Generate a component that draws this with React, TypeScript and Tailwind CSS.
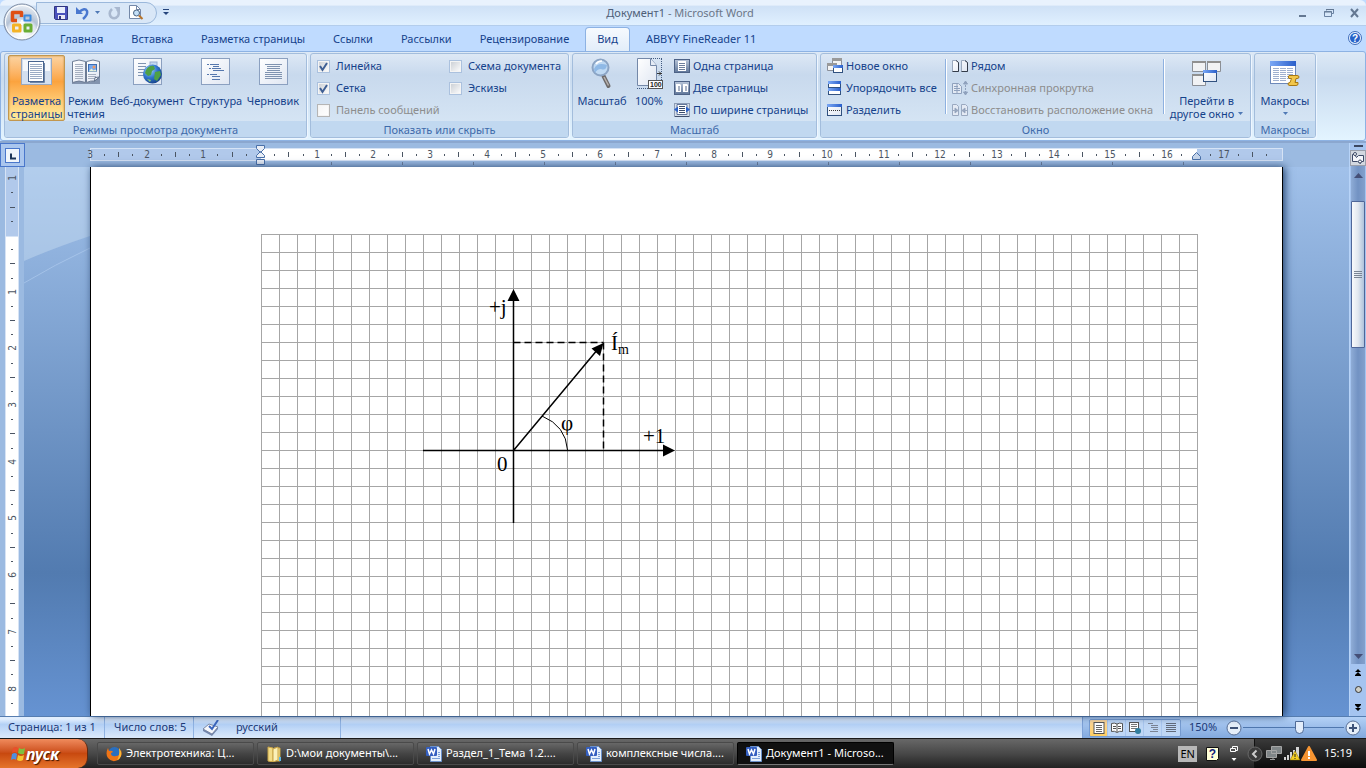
import React, { useState } from "react";

const tabs = ["Главная", "Вставка", "Разметка страницы", "Ссылки", "Рассылки", "Рецензирование", "Вид", "ABBYY FineReader 11"];

const tasks = [
  { icon: "firefox", title: "Электротехника: Ц..." },
  { icon: "folder", title: "D:\\мои документы\\..." },
  { icon: "word", title: "Раздел_1_Тема 1.2...." },
  { icon: "word", title: "комплексные числа...." },
  { icon: "word", title: "Документ1 - Microso..." },
];

// Ruler centimetre at 150% zoom
const CM = 56.69;

function Lines({ x, y, w, n, step = 3, color = "#7f93b0" }: { x: number; y: number; w: number; n: number; step?: number; color?: string }) {
  return (
    <>
      {Array.from({ length: n }, (_, i) => (
        <rect key={i} x={x} y={y + i * step} width={w} height="1" fill={color} />
      ))}
    </>
  );
}

function SharedGradients() {
  return (
    <svg width="0" height="0" className="absolute" aria-hidden="true">
      <defs>
        <linearGradient id="sheet" x1="0" y1="0" x2="1" y2="1">
          <stop offset="0" stopColor="#fff" />
          <stop offset="1" stopColor="#dfe6f2" />
        </linearGradient>
        <linearGradient id="steel" x1="0" y1="0" x2="0" y2="1">
          <stop offset="0" stopColor="#b9c6d9" />
          <stop offset="1" stopColor="#5f7699" />
        </linearGradient>
        <radialGradient id="globe" cx="0.35" cy="0.3" r="0.8">
          <stop offset="0" stopColor="#a5d4ff" />
          <stop offset="0.5" stopColor="#2f74cc" />
          <stop offset="1" stopColor="#123a80" />
        </radialGradient>
        <linearGradient id="winbar" x1="0" y1="0" x2="1" y2="0">
          <stop offset="0" stopColor="#7ba8f5" />
          <stop offset="1" stopColor="#2a5fca" />
        </linearGradient>
      </defs>
    </svg>
  );
}

function PrintLayoutIcon() {
  return (
    <svg width="31" height="27" viewBox="0 0 31 27">
      <rect x="0.5" y="0.5" width="30" height="26" fill="#d3dfef" stroke="#9aa9c0" />
      <rect x="2" y="2" width="27" height="11" fill="#f5f8fc" />
      <rect x="7.5" y="3.5" width="15" height="20" fill="#fff" stroke="#48648f" />
      <path d="M23.5 5v19.500H9" fill="none" stroke="#6f86a8" />
      <Lines x={9} y={6} w={12} n={8} step={2} color="#9babc4" />
    </svg>
  );
}

function ReadingIcon() {
  return (
    <svg width="30" height="27" viewBox="0 0 30 27">
      <path d="M1 5h28v21H1z" fill="#8394ae" />
      <path d="M1.500 3.500Q8 .5 14.500 3.500v21Q8 21.500 1.500 24.500z" fill="url(#sheet)" stroke="#6d7c94" />
      <path d="M28.500 3.500Q22 .5 15.500 3.500v21q4-2 8-1.500l5-4z" fill="url(#sheet)" stroke="#6d7c94" />
      <Lines x={4} y={6} w={8} n={8} step={2} color="#a6b0c0" />
      <rect x="17.500" y="6.500" width="8" height="7" fill="#76a9ee" stroke="#3d6fb5" />
      <path d="M17.500 13.500l3-3 2 2 2-1 1.500 2z" fill="#e8f2d8" />
      <circle cx="23" cy="9" r="1.500" fill="#f09860" />
      <Lines x={17} y={16} w={8} n={3} step={2} color="#a6b0c0" />
      <path d="M23.500 23l.5-3.500 4.500-.5z" fill="#fff" stroke="#5d6f8a" />
    </svg>
  );
}

function WebIcon() {
  return (
    <svg width="29" height="27" viewBox="0 0 29 27">
      <rect x="0.5" y="0.5" width="28" height="26" fill="url(#sheet)" stroke="#8ba0c0" />
      <Lines x={5} y={5} w={8} n={5} />
      <rect x="17" y="4" width="7" height="5" fill="#c4d8f2" stroke="#98acd0" />
      <circle cx="19.500" cy="16" r="9.500" fill="url(#globe)" />
      <path d="M13 12q3-5 8-4l1 3-3 2-1 4-3 1-3-3zM22 14l5-1 1 4-4 6-3-2z" fill="#4fa045" />
      <path d="M14 21l4 1-1 2z" fill="#8bc870" />
    </svg>
  );
}

function OutlineIcon() {
  return (
    <svg width="29" height="27" viewBox="0 0 29 27">
      <rect x="0.5" y="0.5" width="28" height="26" fill="url(#sheet)" stroke="#8ba0c0" />
      <path d="M6 6.500h2m1 0h9M8 10.500h2m1 0h9M12 12.500h11M12 8.500h6M6 16.500h2m1 0h7M11 18.500h8M11 21.500h8" stroke="#5577ad" />
    </svg>
  );
}

function DraftIcon() {
  return (
    <svg width="29" height="27" viewBox="0 0 29 27">
      <rect x="0.5" y="0.5" width="28" height="26" fill="url(#sheet)" stroke="#8ba0c0" />
      <Lines x={6} y={6} w={17} n={1} step={2} />
      <Lines x={8} y={8} w={13} n={3} step={2} />
      <Lines x={6} y={14} w={17} n={4} step={2} />
    </svg>
  );
}

function MagnifierIcon() {
  return (
    <svg width="22" height="32" viewBox="0 0 22 32">
      <path d="M12.500 18l5 10" stroke="#6d6a6a" strokeWidth="4" strokeLinecap="round" />
      <path d="M13 19l4.500 8.500" stroke="#b8b2ae" strokeWidth="1.500" />
      <circle cx="9.500" cy="9.500" r="8" fill="#bfd9f3" stroke="#8ba4c4" strokeWidth="2" />
      <path d="M3 11q3-7 13-4-1 6-6 4-4 0-6 4z" fill="#8fb9e6" />
      <path d="M5 6q2-3 6-3" stroke="#fff" fill="none" strokeWidth="1.500" />
    </svg>
  );
}

function HundredIcon() {
  return (
    <svg width="27" height="32" viewBox="0 0 27 32">
      <path d="M15 .5h11M25.500 1v21M1 30.500h11" stroke="#415a80" strokeDasharray="1 1" fill="none" />
      <path d="M1.500.5h13l6 7v20h-19z" fill="url(#sheet)" stroke="#7488a8" />
      <path d="M14.500.5v7h6" fill="#e5ebf5" stroke="#7488a8" />
      <path d="M21 15.500h5M23 13.500l2 2-2 2" stroke="#333" fill="none" />
      <rect x="12.500" y="22.500" width="14" height="8" fill="#fff" stroke="#555" />
      <text x="14" y="29" fontSize="7" fontWeight="bold" fontFamily="Liberation Sans, sans-serif" fill="#222">100</text>
    </svg>
  );
}

function SmallIcon({ name }: { name: string }) {
  return (
    <svg width="16" height="16" viewBox="0 0 16 16" className="shrink-0">
      {name === "onePage" && (
        <>
          <rect x="0.5" y="1.500" width="15" height="13" fill="url(#steel)" stroke="#4d6286" />
          <rect x="4" y="3" width="8" height="10" fill="#fff" />
          <Lines x={5} y={5} w={6} n={4} step={2} color="#6d7f9c" />
        </>
      )}
      {name === "twoPages" && (
        <>
          <rect x="0.5" y="1.500" width="15" height="13" fill="url(#steel)" stroke="#4d6286" />
          <path d="M2 4h4l1 1v7H2zM9 4h4l1 1v7H9z" fill="#fff" />
          <path d="M5 6v5M12 6v5" stroke="#54688a" />
        </>
      )}
      {name === "pageWidth" && (
        <>
          <rect x="0.5" y="1.500" width="15" height="13" fill="#d5deea" stroke="#8c9cb5" />
          <path d="M3 2.500h10v10H3z" fill="#fff" stroke="#62769a" />
          <Lines x={5} y={4} w={6} n={4} step={2} color="#3b4d6c" />
          <path d="M0 7.500l4-3v6zM16 7.500l-4-3v6z" fill="#2c62c8" />
          <path d="M1 14.500h14" stroke="#3f4f6c" />
        </>
      )}
      {name === "newWindow" && (
        <>
          <path d="M5.500.5h9v7h-9zM.5 5.500h9v7h-9z" fill="#f4f4f4" stroke="#8a8f99" />
          <path d="M5 0h10v3H5zM0 5h10v3H0z" fill="#9a9a9a" />
          <rect x="6.500" y="8.500" width="9" height="6" fill="#fff" stroke="#31517f" />
          <rect x="6" y="7" width="10" height="3" fill="url(#winbar)" />
        </>
      )}
      {name === "arrange" && (
        <>
          <rect x="1.500" y="2" width="12" height="12.500" fill="#fff" stroke="#31517f" />
          <path d="M1 1h13v3H1zM1 8h13v3H1z" fill="url(#winbar)" />
          <path d="M2 7.500h12" stroke="#31517f" />
        </>
      )}
      {name === "split" && (
        <>
          <rect x="0.5" y="2.500" width="14" height="11" fill="url(#sheet)" stroke="#31517f" />
          <rect x="0" y="2" width="15" height="3" fill="url(#winbar)" />
          <path d="M2 8.500h12" stroke="#333" strokeDasharray="1 1" />
        </>
      )}
      {name === "sideBySide" && (
        <>
          <path d="M.5 2.500h4l2 2v9h-6zM9.500 2.500h3l3 2v9h-6z" fill="url(#sheet)" stroke="#9aa9be" />
          <path d="M4 2.500l2.500 2v9M13 2.500l2.500 2v9M.5 13.500h6M9.500 13.500h6" fill="none" stroke="#333b49" />
        </>
      )}
      {name === "sync" && (
        <g stroke="#8fa1bd" fill="none">
          <path d="M.5 3.500h6l3 3v7h-9z" fill="#e4eaf4" />
          <path d="M2 6.500h4M2 8.500h6M2 10.500h6M5 4v9" />
          <path d="M13.500 2v12" strokeDasharray="2 1" />
          <path d="M11.500 4l2-3 2 3zM11.500 12l2 3 2-3z" fill="#8fa1bd" />
        </g>
      )}
      {name === "reset" && (
        <g stroke="#9aa9c0">
          <path d="M.5 2.500h4l2 2v9h-6zM9.500 2.500h4l2 2v9h-6z" fill="#e4eaf4" />
          <path d="M1 8.500h4M3 6l3 2.500L3 11zM15 8.500h-4M13 6l-3 2.500 3 2.500z" fill="#8496b5" />
        </g>
      )}
    </svg>
  );
}

function SwitchIcon() {
  return (
    <svg width="29" height="26" viewBox="0 0 29 26">
      <g fill="#f1f2f4" stroke="#8b8f96">
        <path d="M.5.5h13v10H.5zM15.500.5h13v10h-13zM.5 13.500h13v11H.5z" />
      </g>
      <path d="M0 0h14v2H0zM15 0h14v2H15zM0 13h14v2H0z" fill="#909090" />
      <rect x="11.500" y="9.500" width="13" height="11" fill="url(#sheet)" stroke="#31517f" />
      <rect x="11" y="9" width="14" height="3" fill="url(#winbar)" />
    </svg>
  );
}

function MacroIcon() {
  return (
    <svg width="30" height="26" viewBox="0 0 30 26">
      <rect x="0.5" y="1.500" width="25" height="21" fill="#fff" stroke="#6d89ba" />
      <rect x="0" y="0" width="26" height="5" fill="url(#winbar)" />
      <path d="M3 7.500h20M3 9.500h20M3 11.500h20M3 13.500h20M3 15.500h20M3 17.500h20M3 19.500h14" stroke="#9fb0cf" strokeDasharray="6 1" />
      <path d="M19 14.500h8q2 0 2 1.500t-2 1.500h-1l-1 4h3v1.500q0 1.500-2 1.500h-6q-2 0-2-1.500t2-1.500l1.500-4H19q-1.500-1.500 0-3z" fill="#f2c64a" stroke="#a87812" />
    </svg>
  );
}

function Caret() {
  return (
    <svg width="5" height="3" viewBox="0 0 5 3" className="inline-block align-middle">
      <path d="M0 0h5L2.500 3z" fill="#4f79b5" />
    </svg>
  );
}

function Group({ title, className, children }: { title: string; className: string; children: React.ReactNode }) {
  return (
    <section className={`flex shrink-0 flex-col overflow-hidden rounded-[3px] border border-[#a3bddc] bg-linear-to-b from-[#dde8f5] from-0% via-[#c8d9ed] via-25% to-[#d9e8f6] shadow-[1px_1px_0_#eef6ff] ${className}`}>
      <div className="flex flex-1 items-start pt-px">{children}</div>
      <h2 className="h-4 bg-[#c1d8f0] text-center leading-[17px] text-[#3e6aaa]">{title}</h2>
    </section>
  );
}

function BigButton({ icon, lines, active, className, caret }: { icon: React.ReactNode; lines: string[]; active?: boolean; className: string; caret?: boolean }) {
  return (
    <button
      className={`flex h-[66px] shrink-0 flex-col items-center whitespace-nowrap pt-0.5 leading-[13px] ${className} ${
        active ? "rounded-[2px] border border-[#c2974f] bg-linear-to-b from-[#fbd3a0] from-0% via-[#fba33e] via-40% to-[#fff0a0] shadow-[inset_0_0_2px_#b8863c]" : "border border-transparent"
      }`}
    >
      <span className={`flex h-9 items-start ${caret ? "pt-[3px]" : ""}`}>{icon}</span>
      {lines.map((line, i) => (
        <span key={line} className="flex items-center gap-1">
          {line}
          {caret && i > 0 && <Caret />}
        </span>
      ))}
      {caret && lines.length === 1 && <span className="leading-[10px]"><Caret /></span>}
    </button>
  );
}

function Command({ icon, label, disabled }: { icon: string; label: string; disabled?: boolean }) {
  return (
    <button disabled={disabled} className="flex h-[22px] items-center gap-[3px] whitespace-nowrap disabled:text-[#8d8d8d]">
      <SmallIcon name={icon} />
      {label}
    </button>
  );
}

function Check({ label, defaultChecked, disabled }: { label: string; defaultChecked?: boolean; disabled?: boolean }) {
  return (
    <label className={`flex h-[22px] items-center gap-1.5 whitespace-nowrap ${disabled ? "text-[#8d8d8d]" : ""}`}>
      <span className="relative flex">
        <input
          type="checkbox"
          defaultChecked={defaultChecked}
          disabled={disabled}
          className="peer size-[13px] appearance-none border border-[#abc1de] bg-linear-to-br from-[#c9cdd3] to-white shadow-[inset_0_0_0_1px_#f4f4f4] disabled:border-[#b5b5b5] disabled:from-[#f4f4f4]"
        />
        <svg width="13" height="13" viewBox="0 0 13 13" className="pointer-events-none invisible absolute inset-0 peer-checked:visible">
          <path d="M3 6l2.500 4L10 3" fill="none" stroke="#3f5f94" strokeWidth="2" />
        </svg>
      </span>
      {label}
    </label>
  );
}

function Separator() {
  return <div className="mt-1 h-[55px] w-0.5 shrink-0 border-l border-[#8eb1e0] bg-white" />;
}

function OfficeButton() {
  return (
    <button aria-label="Office" className="absolute top-[3px] left-[3px] z-10">
      <svg width="38" height="38" viewBox="0 0 38 38">
        <defs>
          <radialGradient id="orb" cx="0.5" cy="0.85" r="0.9">
            <stop offset="0" stopColor="#fff" />
            <stop offset="0.45" stopColor="#dde4ee" />
            <stop offset="0.55" stopColor="#b4c2d5" />
            <stop offset="1" stopColor="#f6f9fd" />
          </radialGradient>
        </defs>
        <circle cx="19" cy="19" r="18" fill="url(#orb)" stroke="#7c8ba3" />
        <circle cx="19" cy="19" r="16.500" fill="none" stroke="#fff" />
        <g fill="none" strokeLinejoin="round">
          <path d="M14 17.500H9.500V9.500h9V14" stroke="#df4f14" strokeWidth="3.500" />
          <path d="M21.500 17.500h6v-5h-6z" stroke="#3b8ade" strokeWidth="2" />
          <path d="M10.500 22v6h6.500v-6z" stroke="#f4b326" strokeWidth="3" />
          <path d="M22 22v6h6v-6z" stroke="#6aae35" strokeWidth="3" />
        </g>
        <path d="M16.500 19.500h5M19 17v5" stroke="#fff" strokeWidth="1.500" />
      </svg>
    </button>
  );
}

function TitleBar() {
  return (
    <header className="flex h-[26px] shrink-0 items-center rounded-t-md border-b border-[#b3cdec] bg-linear-to-b from-[#e9f2fd] from-20% via-[#cfe1f6] via-25% to-[#e0f0ff]">
      <div className="flex flex-1 items-center">
        <div className="ml-9 flex h-[22px] w-[121px] items-center rounded-r-full border border-[#9bb8db] bg-[#d9e7f7] pl-[17px]">
          <button aria-label="Сохранить">
            <svg width="14" height="14" viewBox="0 0 14 14">
              <path d="M.5.5h13v13h-12l-1-1z" fill="#4a52bc" stroke="#30357f" />
              <path d="M3 1h8v6H3z" fill="#e8eefc" />
              <path d="M4 9h7v4H4z" fill="#e8e8f4" />
              <path d="M5 10h2v3H5z" fill="#30357f" />
            </svg>
          </button>
          <button aria-label="Отменить" className="ml-2 flex items-center gap-1.5">
            <svg width="13" height="14" viewBox="0 0 13 14">
              <path d="M3 6q6-5 8-1 1 4-4 8" fill="none" stroke="#4a78cf" strokeWidth="2.500" />
              <path d="M0 1v7h7z" fill="#4a78cf" />
            </svg>
            <Caret />
          </button>
          <button aria-label="Повторить" disabled className="ml-2">
            <svg width="13" height="14" viewBox="0 0 13 14">
              <path d="M4 3q-4 4-1 8 4 3 7-1 2-4-1-7" fill="none" stroke="#a9b8cf" strokeWidth="2.500" />
              <path d="M6 1h6v6z" fill="#a9b8cf" />
            </svg>
          </button>
          <button aria-label="Предварительный просмотр" className="ml-2">
            <svg width="15" height="15" viewBox="0 0 15 15">
              <path d="M.5.5h7l4 4v9H.5z" fill="#fff" stroke="#7488a8" />
              <path d="M7.500.5v4h4" fill="none" stroke="#7488a8" />
              <circle cx="7.500" cy="8" r="3" fill="#c5e0f7" stroke="#496381" />
              <path d="M10 10.500l3.500 3.500" stroke="#b8742a" strokeWidth="2" />
            </svg>
          </button>
        </div>
        <button aria-label="Настройка панели" className="ml-1.5">
          <svg width="6" height="7" viewBox="0 0 6 7">
            <path d="M0 .5h6" stroke="#24447c" />
            <path d="M0 3h6L3 6z" fill="#24447c" />
          </svg>
        </button>
      </div>
      <h1 className="pt-0.5 text-[#4f5f78]">
        Документ1 <span className="text-[#6b7688]">- Microsoft Word</span>
      </h1>
      <div className="flex flex-1 justify-end gap-4 pr-1.5">
        <button aria-label="Свернуть">
          <svg width="10" height="10" viewBox="0 0 10 10"><path d="M1 8h7" stroke="#647892" strokeWidth="2" /></svg>
        </button>
        <button aria-label="Восстановить">
          <svg width="10" height="10" viewBox="0 0 10 10">
            <path d="M2.500 2.500v-1h7v4h-2M.5 3.500h7v5h-7z" fill="none" stroke="#6b83a3" />
            <path d="M0 4h8M2 1.500h8" stroke="#647892" />
          </svg>
        </button>
        <button aria-label="Закрыть">
          <svg width="10" height="10" viewBox="0 0 10 10"><path d="M1 1l7 8M8 1L1 9" stroke="#647892" strokeWidth="2" /></svg>
        </button>
      </div>
    </header>
  );
}

function Tabs() {
  const [current, setCurrent] = useState("Вид");
  return (
    <nav className="flex h-[25px] shrink-0 items-end bg-[#bfdbff] pl-[46px]">
      {tabs.map((tab) => (
        <button
          key={tab}
          onClick={() => setCurrent(tab)}
          className={`mx-0.5 h-6 rounded-t border-x border-t px-[11px] whitespace-nowrap ${
            tab === current ? "border-[#8db2e3] bg-linear-to-b from-[#f6fafe] to-[#e2edf9]" : "border-transparent"
          }`}
        >
          {tab}
        </button>
      ))}
      <button aria-label="Справка" className="mr-1 mb-1.5 ml-auto">
        <svg width="14" height="14" viewBox="0 0 14 14">
          <circle cx="7" cy="7" r="6.500" fill="#e6f1ff" stroke="#3e6cba" />
          <circle cx="7" cy="7" r="5" fill="#2762c8" />
          <text x="7" y="10.500" textAnchor="middle" fontSize="10" fontWeight="bold" fontFamily="Liberation Sans, sans-serif" fill="#fff">?</text>
        </svg>
      </button>
    </nav>
  );
}

function Ribbon() {
  return (
    <div className="flex h-[90px] shrink-0 gap-[3px] rounded-[3px] border border-[#8db2e3] bg-linear-to-b from-[#dde9f6] from-0% via-[#c9dbef] via-30% to-[#e3f4ff] px-[3px] pt-px pb-0.5">
      <Group title="Режимы просмотра документа" className="w-[303px]">
        <div className="flex pl-[3px]">
          <BigButton active className="w-[57px]" icon={<PrintLayoutIcon />} lines={["Разметка", "страницы"]} />
          <BigButton className="w-[42px]" icon={<ReadingIcon />} lines={["Режим", "чтения"]} />
          <BigButton className="w-20" icon={<WebIcon />} lines={["Веб-документ"]} />
          <BigButton className="w-[57px]" icon={<OutlineIcon />} lines={["Структура"]} />
          <BigButton className="w-[58px]" icon={<DraftIcon />} lines={["Черновик"]} />
        </div>
      </Group>
      <Group title="Показать или скрыть" className="w-[259px]">
        <div className="w-[132px] pl-1.5">
          <Check label="Линейка" defaultChecked />
          <Check label="Сетка" defaultChecked />
          <Check label="Панель сообщений" disabled />
        </div>
        <div className="pl-1.5">
          <Check label="Схема документа" />
          <Check label="Эскизы" />
        </div>
      </Group>
      <Group title="Масштаб" className="w-[245px]">
        <BigButton className="ml-0.5 w-[54px]" icon={<MagnifierIcon />} lines={["Масштаб"]} />
        <BigButton className="w-10" icon={<HundredIcon />} lines={["100%"]} />
        <div className="pl-[5px]">
          <Command icon="onePage" label="Одна страница" />
          <Command icon="twoPages" label="Две страницы" />
          <Command icon="pageWidth" label="По ширине страницы" />
        </div>
      </Group>
      <Group title="Окно" className="w-[431px]">
        <div className="w-[124px] shrink-0 pl-1.5">
          <Command icon="newWindow" label="Новое окно" />
          <Command icon="arrange" label="Упорядочить все" />
          <Command icon="split" label="Разделить" />
        </div>
        <Separator />
        <div className="w-[216px] shrink-0 pl-[5px]">
          <Command icon="sideBySide" label="Рядом" />
          <Command icon="sync" label="Синхронная прокрутка" disabled />
          <Command icon="reset" label="Восстановить расположение окна" disabled />
        </div>
        <Separator />
        <BigButton className="w-[83px]" icon={<SwitchIcon />} lines={["Перейти в", "другое окно"]} caret />
      </Group>
      <Group title="Макросы" className="w-[62px]">
        <BigButton className="w-[60px]" icon={<MacroIcon />} lines={["Макросы"]} caret />
      </Group>
    </div>
  );
}

function HorizontalRuler() {
  const marks: React.ReactNode[] = [];
  for (let q = -12; q <= 71; q++) {
    const x = Math.round(235 + (q * CM) / 4);
    if (q === 0 || q === 66) continue;
    if (q % 4 === 0) {
      marks.push(<text key={q} x={x} y="15" textAnchor="middle">{Math.abs(q / 4)}</text>);
    } else {
      const half = q % 2 === 0;
      marks.push(<rect key={q} x={x} y={half ? 9 : 11} width="1" height={half ? 5 : 2} />);
    }
  }
  return (
    <svg className="h-6 flex-1 bg-[#9bbae1]" fill="#4b5563" fontSize="10" fontFamily="DejaVu Sans Condensed, Noto Sans, sans-serif">
      <rect x="65.500" y="5.500" width="1192" height="12" fill="#b1c9eb" stroke="#d6e3f5" />
      <rect x="236" y="6" width="936" height="11" fill="#fff" />
      {marks}
      {Array.from({ length: 13 }, (_, i) => (
        <rect key={i} x={306 + i * 71} y="19" width="1" height="3" fill="#6e7f99" />
      ))}
      <path d="M231.500 2.500h8v3l-4 4-4-4zM231.500 14.500v-2l4-4 4 4v2zM231.500 16.500h8v5h-8z" fill="#e9eef6" stroke="#4a70a8" />
      <path d="M1167.500 16.500v-3l4-4 4 4v3z" fill="#c6d5ea" stroke="#4a70a8" />
    </svg>
  );
}

function VerticalRuler() {
  const marks: React.ReactNode[] = [];
  for (let q = -4; q <= 33; q++) {
    const y = Math.round(68 + (q * CM) / 4);
    if (q === 0) continue;
    if (q % 4 === 0) {
      marks.push(<text key={q} transform={`translate(16 ${y}) rotate(-90)`} textAnchor="middle">{Math.abs(q / 4)}</text>);
    } else {
      const half = q % 2 === 0;
      marks.push(<rect key={q} x={half ? 10 : 11} y={y} width={half ? 5 : 2} height="1" />);
    }
  }
  return (
    <svg className="h-full w-6 shrink-0 bg-[#9bbae1]" fill="#4b5563" fontSize="10" fontFamily="DejaVu Sans Condensed, Noto Sans, sans-serif">
      <rect x="5" y="0" width="14" height="100%" fill="#d6e3f5" />
      <rect x="6" y="0" width="12" height="69" fill="#b1c9eb" />
      <rect x="6" y="70" width="12" height="100%" fill="#fff" />
      {marks}
    </svg>
  );
}

function Drawing() {
  return (
    <svg width="1191" height="549" viewBox="91 167 1191 549">
      <g stroke="#a6a6a6" shapeRendering="crispEdges">
        {Array.from({ length: 53 }, (_, i) => (
          <path key={`v${i}`} d={`M${261.5 + i * 18} 234v500`} />
        ))}
        {Array.from({ length: 28 }, (_, i) => (
          <path key={`h${i}`} d={`M261 ${234.5 + i * 18}h937`} />
        ))}
      </g>
      <g stroke="#000" strokeWidth="1.500" fill="none">
        <path d="M513.500 523V298M423 450.500h242M513.500 450.500L598 349" />
        <path d="M513.500 342.500h90M603.500 342.500v108" strokeDasharray="7 4" />
        <path d="M542 416q24 10 25.500 34" strokeWidth="1" />
      </g>
      <path d="M513.500 289l6 12h-12zM675 450.500l-12-6v12zM603.500 343l-3.500 13-8.500-7.500z" />
      <g fontFamily="Liberation Serif, serif" fontSize="21">
        <text x="489" y="314">+j</text>
        <text x="611" y="350">Í<tspan fontSize="14" dy="4">m</tspan></text>
        <text x="561" y="430">φ</text>
        <text x="643" y="443">+1</text>
        <text x="497" y="471">0</text>
      </g>
    </svg>
  );
}

function Scrollbar() {
  return (
    <div className="flex w-[17px] shrink-0 flex-col items-center border-l border-[#b8d4f8] bg-[#a5c4f0]">
      <div className="mt-0.5 h-0.5 w-[9px] shrink-0 bg-[#3c4761]" />
      <button aria-label="Линейка" className="mt-[3px] flex h-4 w-full shrink-0 items-center justify-center border border-[#9a9fac] bg-[#d3d8e0]">
        <svg width="12" height="12" viewBox="0 0 12 12">
          <path d="M.5 2.500h2l2 3 2-2h5v6h-2l-1 2-3-2h-5z" fill="#f5f6fb" stroke="#3e4a68" />
          <circle cx="3" cy="2" r="1.500" fill="#fff" stroke="#3e4a68" />
          <circle cx="8" cy="9.500" r="1.500" fill="#fff" stroke="#3e4a68" />
        </svg>
      </button>
      <div className="flex w-[14px] flex-1 flex-col items-center bg-linear-to-r from-[#8facd6] via-[#7292c3] to-[#83a0cc]">
        <button aria-label="Вверх" className="flex h-[35px] shrink-0 items-start pt-[7px]">
          <svg width="9" height="5" viewBox="0 0 9 5"><path d="M0 5h9L4.500 0z" fill="#454f77" /></svg>
        </button>
        <div className="flex h-[147px] w-full shrink-0 flex-col items-center justify-center gap-px rounded-[1px] border border-[#4f6799] bg-linear-to-r from-[#f8fafc] via-[#e1e7ef] to-[#b0c3dc]">
          <div className="h-px w-2 bg-[#7a8594]" />
          <div className="h-px w-2 bg-[#7a8594]" />
          <div className="h-px w-2 bg-[#7a8594]" />
          <div className="h-px w-2 bg-[#7a8594]" />
        </div>
        <button aria-label="Вниз" className="mt-auto mb-[5px]">
          <svg width="9" height="5" viewBox="0 0 9 5"><path d="M0 0h9L4.500 5z" fill="#454f77" /></svg>
        </button>
      </div>
      <div className="flex h-[52px] shrink-0 flex-col items-center justify-around">
        <button aria-label="Предыдущая страница">
          <svg width="6" height="7" viewBox="0 0 6 7" className="block"><path d="M0 3l3-3 3 3zM0 6l3-3 3 3zM0 6h6v1H0z" /></svg>
        </button>
        <button aria-label="Выбор объекта" className="size-[7px] rounded-full border border-[#333] bg-[#cfcfc6]" />
        <button aria-label="Следующая страница">
          <svg width="6" height="7" viewBox="0 0 6 7" className="block"><path d="M0 1l3 3 3-3zM0 4l3 3 3-3zM0 0h6v1H0z" /></svg>
        </button>
      </div>
    </div>
  );
}

function Workspace() {
  return (
    <main className="flex min-h-0 flex-1 border-t-2 border-[#8ba7cf]">
      <div className="flex min-w-0 flex-1 flex-col">
        <div className="flex h-6 shrink-0">
          <button aria-label="Табуляция" className="flex w-[25px] shrink-0 items-center justify-center border border-[#4a77cb] bg-[#aac6ee]">
            <svg width="15" height="15" viewBox="0 0 15 15">
              <rect x="0.5" y="0.5" width="14" height="14" fill="#f0f5fb" stroke="#4a77cb" />
              <path d="M6 5.500v5h5" fill="none" stroke="#1c3557" strokeWidth="2" />
            </svg>
          </button>
          <HorizontalRuler />
        </div>
        <div className="flex min-h-0 flex-1">
          <VerticalRuler />
          <div className="relative flex min-w-0 flex-1 bg-linear-to-b from-[#a1c1ea] from-0% via-[#527bb0] via-[74%] to-[#6693d2]">
            <svg width="66" height="118" viewBox="0 0 66 118" className="absolute top-0 left-0">
              <path d="M0 0h66v69Q30 81 0 94z" fill="#c4daf0" fillOpacity="0.500" />
              <path d="M0 116q30-18 66-35" fill="none" stroke="#b4cef0" strokeOpacity="0.600" />
            </svg>
            <div className="relative mx-[66px] min-w-0 flex-1 overflow-hidden border-x border-black bg-white shadow-[2px_0_8px_#24436d]">
              <Drawing />
            </div>
          </div>
        </div>
      </div>
      <Scrollbar />
    </main>
  );
}

function ViewIcon({ kind }: { kind: number }) {
  return (
    <svg width="12" height="12" viewBox="0 0 12 12">
      {kind === 0 && <><rect x="1" y="0.5" width="10" height="11" fill="#fff" stroke="#555" /><Lines x={3} y={3} w={6} n={4} step={2} color="#666" /></>}
      {kind === 1 && <path d="M.5 1.500q3-1 5.500.5 2.500-1.500 5.500-.5v8q-3-1-5.500 1-2.500-2-5.500-1zM6 2v8M2 4.500h3M2 6.500h3M7 4.500h3M7 6.500h3" fill="#fff" stroke="#555" />}
      {kind === 2 && <><rect x="0.5" y="0.5" width="9" height="9" fill="#fff" stroke="#555" /><Lines x={2} y={2} w={6} n={3} step={2} color="#777" /><circle cx="9" cy="9" r="3" fill="#2f7d9d" /></>}
      {kind === 3 && <path d="M1 1.500h5M4 3.500h7M4 5.500h7M6 7.500h5M3 9.500h8" stroke="#7b8494" />}
      {kind === 4 && <Lines x={1} y={1} w={10} n={5} step={2} color="#626b7a" />}
    </svg>
  );
}

function ZoomButton({ label, plus }: { label: string; plus?: boolean }) {
  return (
    <button aria-label={label}>
      <svg width="16" height="16" viewBox="0 0 16 16" className="block">
        <circle cx="8" cy="8" r="7" fill="#e5eef9" stroke="#586f96" />
        <path d={plus ? "M4 8h8M8 4v8" : "M4 8h8"} stroke="#3e5278" strokeWidth="2" />
      </svg>
    </button>
  );
}

function StatusBar() {
  return (
    <footer className="flex h-[22px] shrink-0 items-stretch border-t border-[#567db0] bg-linear-to-b from-[#e2eefd] from-10% via-[#b4d1f6] via-35% to-[#dbe9fa] text-[#1c3a78]">
      <span className="flex w-[105px] items-center border-r border-[#8fb2e2] pl-2">Страница: 1 из 1</span>
      <span className="flex w-[89px] items-center border-r border-[#8fb2e2] pl-[9px]">Число слов: 5</span>
      <span className="flex w-[147px] items-center gap-4 border-r border-[#8fb2e2] pl-2">
        <svg width="18" height="16" viewBox="0 0 18 16">
          <path d="M1 9l6-5 9 3-6 7z" fill="#f6f8fc" stroke="#7f8ba4" />
          <path d="M1 9v2l9 5 6-7V7l-6 7z" fill="#7386ab" />
          <path d="M7 6l3 3 6-9" fill="none" stroke="#3b66bd" strokeWidth="2" />
        </svg>
        русский
      </span>
      <div className="ml-auto flex items-center border-l border-[#7da1d6] bg-linear-to-b from-[#b4d1f6] to-[#82a9de] pl-1.5">
        <div className="flex h-[18px] overflow-hidden rounded-[2px] border border-[#769bd0]">
          {["Разметка страницы", "Режим чтения", "Веб-документ", "Структура", "Черновик"].map((view, i) => (
            <button
              key={view}
              aria-label={view}
              className={`flex w-[18px] items-center justify-center border-r border-[#a9c6ee] last:border-r-0 ${i === 0 ? "bg-linear-to-b from-[#fdd79d] to-[#ffcf60]" : "bg-[#bfd7f5]"}`}
            >
              <ViewIcon kind={i} />
            </button>
          ))}
        </div>
        <span className="w-[45px] pl-2">150%</span>
        <ZoomButton label="Уменьшить" />
        <input
          type="range"
          aria-label="Масштаб"
          defaultValue={56}
          className="mx-px h-4 w-[101px] appearance-none bg-[linear-gradient(#4f77ae,#4f77ae)] bg-[length:100%_1px] bg-center bg-no-repeat [&::-webkit-slider-thumb]:h-[13px] [&::-webkit-slider-thumb]:w-[9px] [&::-webkit-slider-thumb]:appearance-none [&::-webkit-slider-thumb]:rounded-b-full [&::-webkit-slider-thumb]:border [&::-webkit-slider-thumb]:border-[#4f6b98] [&::-webkit-slider-thumb]:bg-[#e3edfa]"
        />
        <ZoomButton label="Увеличить" plus />
        <span className="w-[5px]" />
      </div>
    </footer>
  );
}

function TaskIcon({ name }: { name: string }) {
  return (
    <svg width="16" height="16" viewBox="0 0 16 16" className="shrink-0">
      {name === "firefox" && (
        <>
          <circle cx="8.500" cy="7.500" r="6.500" fill="#2a6fc0" />
          <path d="M2 2q-3 6 0 10 4 5 10 2 5-4 3-10-1 6-5 6-5 1-5-3l2-1q-1-2-4-1z" fill="#ee7416" />
          <path d="M13 2q3 3 2 8-1 3-4 4 3-4 2-12z" fill="#fdb633" />
        </>
      )}
      {name === "folder" && (
        <>
          <path d="M2 1l5 1v14l-5-1zM8 2h6v13H8z" fill="#f3dc87" stroke="#c8a446" />
          <path d="M7 3l5-2v13l-5 2z" fill="#fbf0b8" stroke="#c8a446" />
          <path d="M13 11h2v4h-2z" fill="#5eb8e8" />
        </>
      )}
      {name === "word" && (
        <>
          <path d="M4.500.5h8l3 3v12h-11z" fill="#e4effc" stroke="#6b91cb" />
          <path d="M6 12.500h8M12 6.500h2M12 8.500h2M12 10.500h2" stroke="#7ba0d8" />
          <rect x="0" y="1" width="11" height="9" rx="1" fill="#345fc0" />
          <path d="M2 3l1.500 5 2-4 2 4L9 3" fill="none" stroke="#fff" strokeWidth="1.500" />
        </>
      )}
    </svg>
  );
}

function Taskbar() {
  return (
    <div className="flex h-[30px] shrink-0 items-stretch border-t border-[#1a1a1a] bg-linear-to-b from-[#686868] from-0% via-[#484848] via-50% to-[#232323] text-white">
      <button className="mr-[9px] flex w-[88px] shrink-0 items-center rounded-r-[10px] border-r border-[#5e2a12] bg-linear-to-b from-[#f08b5c] from-0% via-[#c8490f] via-50% to-[#e5742a] pl-[11px]">
        <svg width="15" height="16" viewBox="0 0 15 16">
          <path d="M2 2q3-2 5 0l-1 5q-2-2-5 0z" fill="#e8502a" />
          <path d="M8 2q3 2 6 0l-1 6q-3 1-6-1z" fill="#7fbf3e" />
          <path d="M1 8q3-2 5 0l-1 6q-2-2-5 0z" fill="#4f8fe0" />
          <path d="M7 9q3 2 6 0l-1 5q-3 2-6 0z" fill="#f6c42f" />
        </svg>
        <span className="text-base leading-5 font-bold italic [text-shadow:1px_1px_1px_#3b1500]">пуск</span>
      </button>
      <div className="flex gap-[3px] py-[3px]">
        {tasks.map((task, i) => (
          <button
            key={task.title}
            className={`flex w-[157px] items-center gap-1 rounded-[2px] border pl-2 whitespace-nowrap ${
              i === tasks.length - 1 ? "border-black border-b-[#777] bg-[#101010]" : "border-[#4a4a4a] bg-linear-to-b from-[#686868] from-0% via-[#454545] via-50% to-[#2c2c2c]"
            }`}
          >
            <TaskIcon name={task.icon} />
            {task.title}
          </button>
        ))}
      </div>
      <div className="ml-auto flex items-center">
        <span className="mr-[9px] bg-[#b8b8b8] px-0.5 leading-4 text-black">EN</span>
        <button aria-label="Справка" className="mr-[11px]">
          <svg width="13" height="14" viewBox="0 0 13 14">
            <path d="M.5.5h12v11l-2 2H.5z" fill="#ffffd8" stroke="#111" />
            <text x="6.500" y="11" textAnchor="middle" fontSize="12" fontWeight="bold" fontFamily="Liberation Sans, sans-serif" fill="#10207a">?</text>
          </svg>
        </button>
        <button aria-label="Параметры" className="mr-4">
          <svg width="8" height="16" viewBox="0 0 8 16">
            <path d="M2.500 2.500v-2h5v4h-2M.5 2.500h5v3h-5z" fill="none" stroke="#fff" />
            <path d="M1.500 12h5L4 15z" fill="#fff" />
          </svg>
        </button>
      </div>
      <div className="flex items-center border-l border-[#111] bg-linear-to-b from-[#3a3a3a] to-[#0c0c0c] pr-[14px]">
        <button aria-label="Показать значки" className="-ml-2">
          <svg width="16" height="16" viewBox="0 0 16 16" className="block">
            <circle cx="8" cy="8" r="7" fill="#3b3b3b" stroke="#686868" />
            <path d="M9.500 4.500L6 8l3.500 3.500" fill="none" stroke="#ccc" strokeWidth="2" />
          </svg>
        </button>
        <svg width="17" height="15" viewBox="0 0 17 15" className="ml-0.5">
          <path d="M6.500.5h10v7h-10zM1.500 4.500h10v7h-10z" fill="#7f8587" stroke="#a5a5a5" />
          <path d="M5 13.500h5M8 12v2" stroke="#999" />
        </svg>
        <svg width="17" height="15" viewBox="0 0 17 15" className="ml-px">
          <path d="M1 11h2v3H1zM4 9h2v5H4zM7 6h2v8H7zM10 4h2v10h-2zM13 1h3v13h-3z" fill="#d4d4d4" />
          <path d="M12 5l5 9H7z" fill="#f5cf23" stroke="#806800" strokeWidth="0.500" />
          <path d="M12 8v3M12 12v1" stroke="#222" />
        </svg>
        <svg width="16" height="15" viewBox="0 0 16 15" className="ml-px">
          <path d="M8 1l7 13H1z" fill="#f79532" stroke="#f79532" strokeWidth="2" strokeLinejoin="round" />
          <path d="M8 5v5M8 11v2" stroke="#fff" strokeWidth="2" />
        </svg>
        <time className="ml-[7px]">15:19</time>
      </div>
    </div>
  );
}

export default function App() {
  return (
    <div className="relative flex h-screen flex-col overflow-hidden bg-[#bfdbff] font-['Noto_Sans',sans-serif] text-[11px] text-[#15428b]">
      <SharedGradients />
      <OfficeButton />
      <TitleBar />
      <Tabs />
      <Ribbon />
      <Workspace />
      <StatusBar />
      <Taskbar />
    </div>
  );
}
